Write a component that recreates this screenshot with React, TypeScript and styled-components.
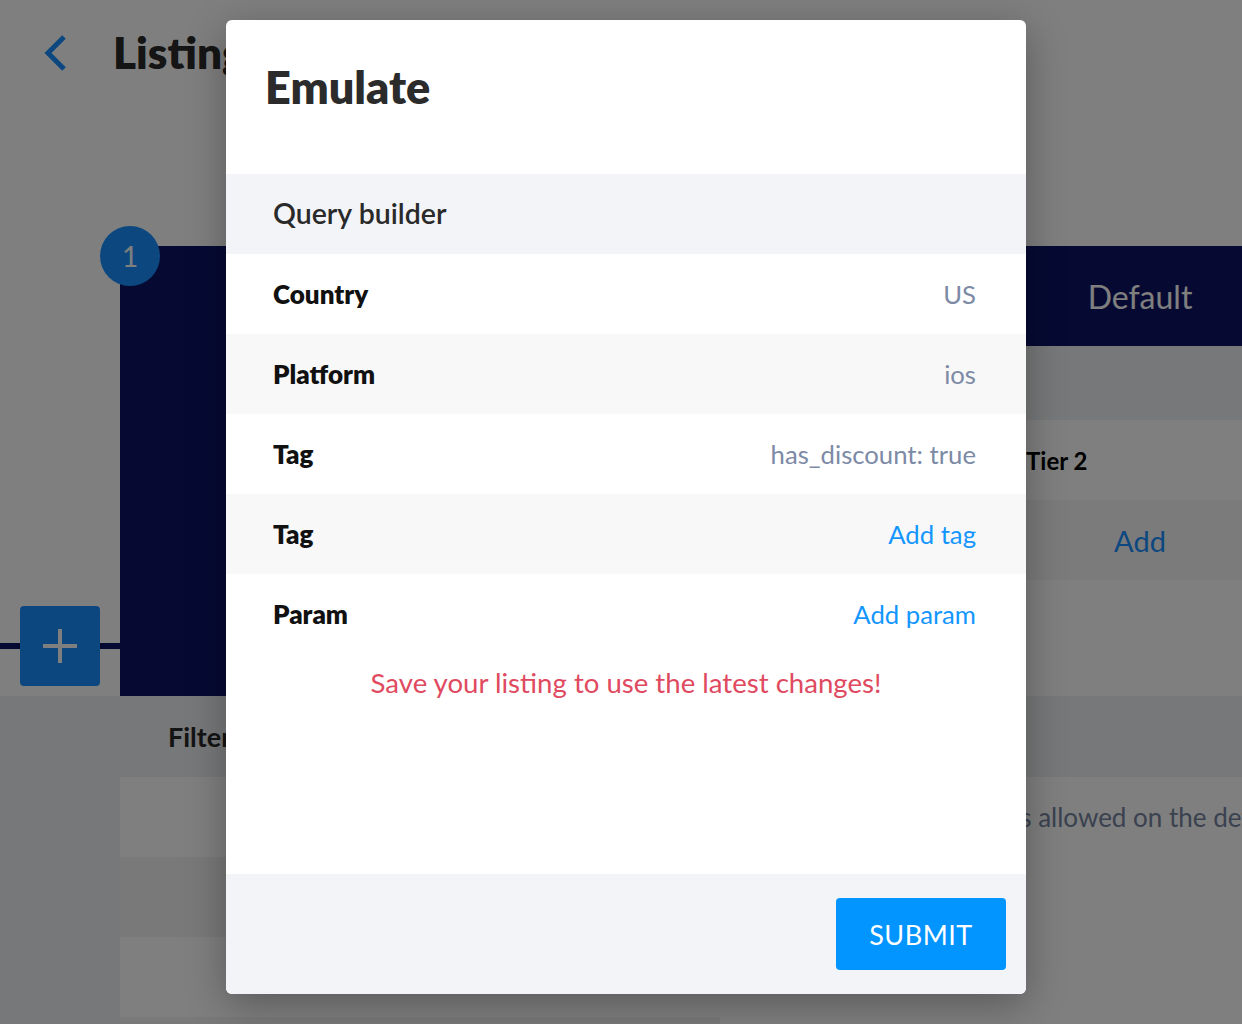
import React from "react";
import styled, { createGlobalStyle } from "styled-components";

const Global = createGlobalStyle`
  html, body { margin: 0; padding: 0; }
  body { font-family: Lato, "Open Sans", sans-serif; background: #fff; }
  * { box-sizing: border-box; }
`;

const Page = styled.div`
  position: relative;
  width: 1242px;
  height: 1024px;
  overflow: hidden;
  background: #fff;
`;

const TopBar = styled.header`
  display: flex;
  align-items: center;
  height: 105px;
  padding-left: 42px;
  gap: 43px;
`;

const PageTitle = styled.h1`
  margin: 0;
  font-size: 44px;
  line-height: 1.2;
  font-weight: 800;
  color: #2a2a2a;
`;

const StepSection = styled.section`
  display: flex;
  padding-top: 141px;
`;

const Gutter = styled.div`
  position: relative;
  width: 120px;
  flex: none;
  display: flex;
  align-items: flex-end;
  padding: 0 0 10px 20px;
  &::before {
    content: "";
    position: absolute;
    left: 0;
    right: 0;
    bottom: 47px;
    height: 6px;
    background: #0d1566;
  }
`;

const AddStepButton = styled.button`
  position: relative;
  width: 80px;
  height: 80px;
  border: none;
  border-radius: 4px;
  background: #1890ff;
  display: flex;
  align-items: center;
  justify-content: center;
  padding: 0;
`;

const StepCard = styled.div`
  position: relative;
  flex: 1;
  height: 450px;
  display: flex;
`;

const StepBadge = styled.div`
  position: absolute;
  left: -20px;
  top: -20px;
  width: 60px;
  height: 60px;
  border-radius: 50%;
  background: #1890ff;
  color: #fff;
  font-size: 28px;
  display: flex;
  align-items: center;
  justify-content: center;
`;

const NavyColumn = styled.div`
  width: 280px;
  background: #0d1566;
`;

const TierArea = styled.div`
  flex: 1;
  display: flex;
  flex-direction: column;
`;

const TierRow = styled.div<{ $h?: number; $bg: string }>`
  display: grid;
  grid-template-columns: 1fr 216px;
  height: ${(p) => (p.$h ? `${p.$h}px` : "auto")};
  flex: ${(p) => (p.$h ? "none" : "1")};
  background: ${(p) => p.$bg};
  align-items: center;
`;

const TierHead = styled.div`
  grid-column: 2;
  padding-left: 12px;
  text-align: center;
  color: #fff;
  font-size: 32px;
`;

const TierLabel = styled.div`
  grid-column: 2;
  font-size: 24px;
  font-weight: 700;
  color: #000;
`;

const TierLink = styled.div`
  grid-column: 2;
  padding-left: 12px;
  text-align: center;
  color: #1890ff;
  font-size: 29px;
`;

const FiltersSection = styled.section`
  background: #eff0f2;
  padding-top: 25px;
  height: 400px;
`;

const FiltersTitle = styled.h2`
  margin: 0 0 24px 168px;
  font-size: 27px;
  line-height: 1.2;
  font-weight: 700;
  color: #282828;
`;

const FiltersTable = styled.div`
  margin-left: 120px;
  display: flex;
  height: 320px;
`;

const FilterRows = styled.div`
  width: 600px;
  flex: none;
  display: flex;
  flex-direction: column;
`;

const FilterRow = styled.div<{ $alt?: boolean }>`
  height: 80px;
  flex: none;
  background: ${(p) => (p.$alt ? "#f3f3f3" : "#fff")};
`;

const FilterNote = styled.div`
  flex: 1;
  min-width: 0;
  overflow: hidden;
  background: #fff;
  padding: 24px 0 0 206px;
  white-space: nowrap;
  font-size: 26px;
  color: #7484a0;
`;

/* Modal */
const Overlay = styled.div`
  position: absolute;
  inset: 0;
  z-index: 10;
  background: rgba(0, 0, 0, 0.5);
  display: flex;
  align-items: flex-start;
  padding: 20px 0 0 226px;
`;

const Modal = styled.div`
  width: 800px;
  height: 974px;
  background: #fff;
  border-radius: 6px;
  box-shadow: 0 10px 40px rgba(0, 0, 0, 0.3);
  display: flex;
  flex-direction: column;
  overflow: hidden;
`;

const ModalHeader = styled.div`
  height: 154px;
  flex: none;
  padding: 40px 40px 0 39px;
`;

const ModalTitle = styled.h2`
  margin: 0;
  font-size: 45px;
  line-height: 1.2;
  font-weight: 800;
  color: #2b2b2b;
`;

const SectionHead = styled.div`
  height: 80px;
  flex: none;
  background: #f3f4f8;
  display: flex;
  align-items: center;
  padding: 0 47px 2px;
  font-size: 28.5px;
  font-weight: 600;
  color: #2a2a2a;
`;

const Row = styled.div<{ $alt?: boolean }>`
  height: 80px;
  flex: none;
  display: flex;
  align-items: center;
  justify-content: space-between;
  padding: 0 50px 0 47px;
  background: ${(p) => (p.$alt ? "#f8f8f8" : "#fff")};
`;

const Label = styled.span`
  font-size: 26px;
  font-weight: 800;
  color: #111;
`;

const Value = styled.span<{ $link?: boolean }>`
  font-size: 25.7px;
  color: ${(p) => (p.$link ? "#1496ff" : "#7d8aa6")};
  cursor: ${(p) => (p.$link ? "pointer" : "default")};
`;

const Notice = styled.p`
  margin: 12px 0 0;
  text-align: center;
  font-size: 27.6px;
  line-height: 1.2;
  color: #e04a5f;
`;

const ModalBody = styled.div`
  flex: 1;
`;

const ModalFooter = styled.div`
  height: 120px;
  flex: none;
  background: #f3f4f8;
  display: flex;
  align-items: center;
  justify-content: flex-end;
  padding-right: 20px;
`;

const SubmitButton = styled.button`
  width: 170px;
  height: 72px;
  border: none;
  border-radius: 4px;
  background: #0294ff;
  color: #fff;
  font-family: inherit;
  font-size: 27px;
  letter-spacing: 0.5px;
  padding: 0;
`;

const rows: { label: string; value: string; link?: boolean }[] = [
  { label: "Country", value: "US" },
  { label: "Platform", value: "ios" },
  { label: "Tag", value: "has_discount: true" },
  { label: "Tag", value: "Add tag", link: true },
  { label: "Param", value: "Add param", link: true },
];

export default function App() {
  return (
    <>
      <Global />
      <Page>
        <TopBar>
          <svg width="28" height="40" viewBox="0 0 28 40">
            <polyline points="22,4 6,20 22,36" fill="none" stroke="#1890ff" strokeWidth="5" />
          </svg>
          <PageTitle>Listing</PageTitle>
        </TopBar>
        <StepSection>
          <Gutter>
            <AddStepButton>
              <svg width="40" height="40" viewBox="0 0 40 40">
                <path d="M20 3v34M3 20h34" stroke="#fff" strokeWidth="4" />
              </svg>
            </AddStepButton>
          </Gutter>
          <StepCard>
            <StepBadge>1</StepBadge>
            <NavyColumn />
            <TierArea>
              <TierRow $h={100} $bg="#0d1566">
                <TierHead>Default</TierHead>
              </TierRow>
              <TierRow $h={74} $bg="#eef0f2" />
              <TierRow $h={80} $bg="#fff">
                <TierLabel>Tier 2</TierLabel>
              </TierRow>
              <TierRow $h={80} $bg="#f6f6f6">
                <TierLink>Add</TierLink>
              </TierRow>
              <TierRow $bg="#fff" />
            </TierArea>
          </StepCard>
        </StepSection>
        <FiltersSection>
          <FiltersTitle>Filters</FiltersTitle>
          <FiltersTable>
            <FilterRows>
              <FilterRow />
              <FilterRow $alt />
              <FilterRow />
              <FilterRow $alt />
            </FilterRows>
            <FilterNote>No filters allowed on the default tier</FilterNote>
          </FiltersTable>
        </FiltersSection>

        <Overlay>
          <Modal>
            <ModalHeader>
              <ModalTitle>Emulate</ModalTitle>
            </ModalHeader>
            <SectionHead>Query builder</SectionHead>
            {rows.map((r, i) => (
              <Row key={i} $alt={i % 2 === 1}>
                <Label>{r.label}</Label>
                <Value $link={r.link}>{r.value}</Value>
              </Row>
            ))}
            <ModalBody>
              <Notice>Save your listing to use the latest changes!</Notice>
            </ModalBody>
            <ModalFooter>
              <SubmitButton>SUBMIT</SubmitButton>
            </ModalFooter>
          </Modal>
        </Overlay>
      </Page>
    </>
  );
}
